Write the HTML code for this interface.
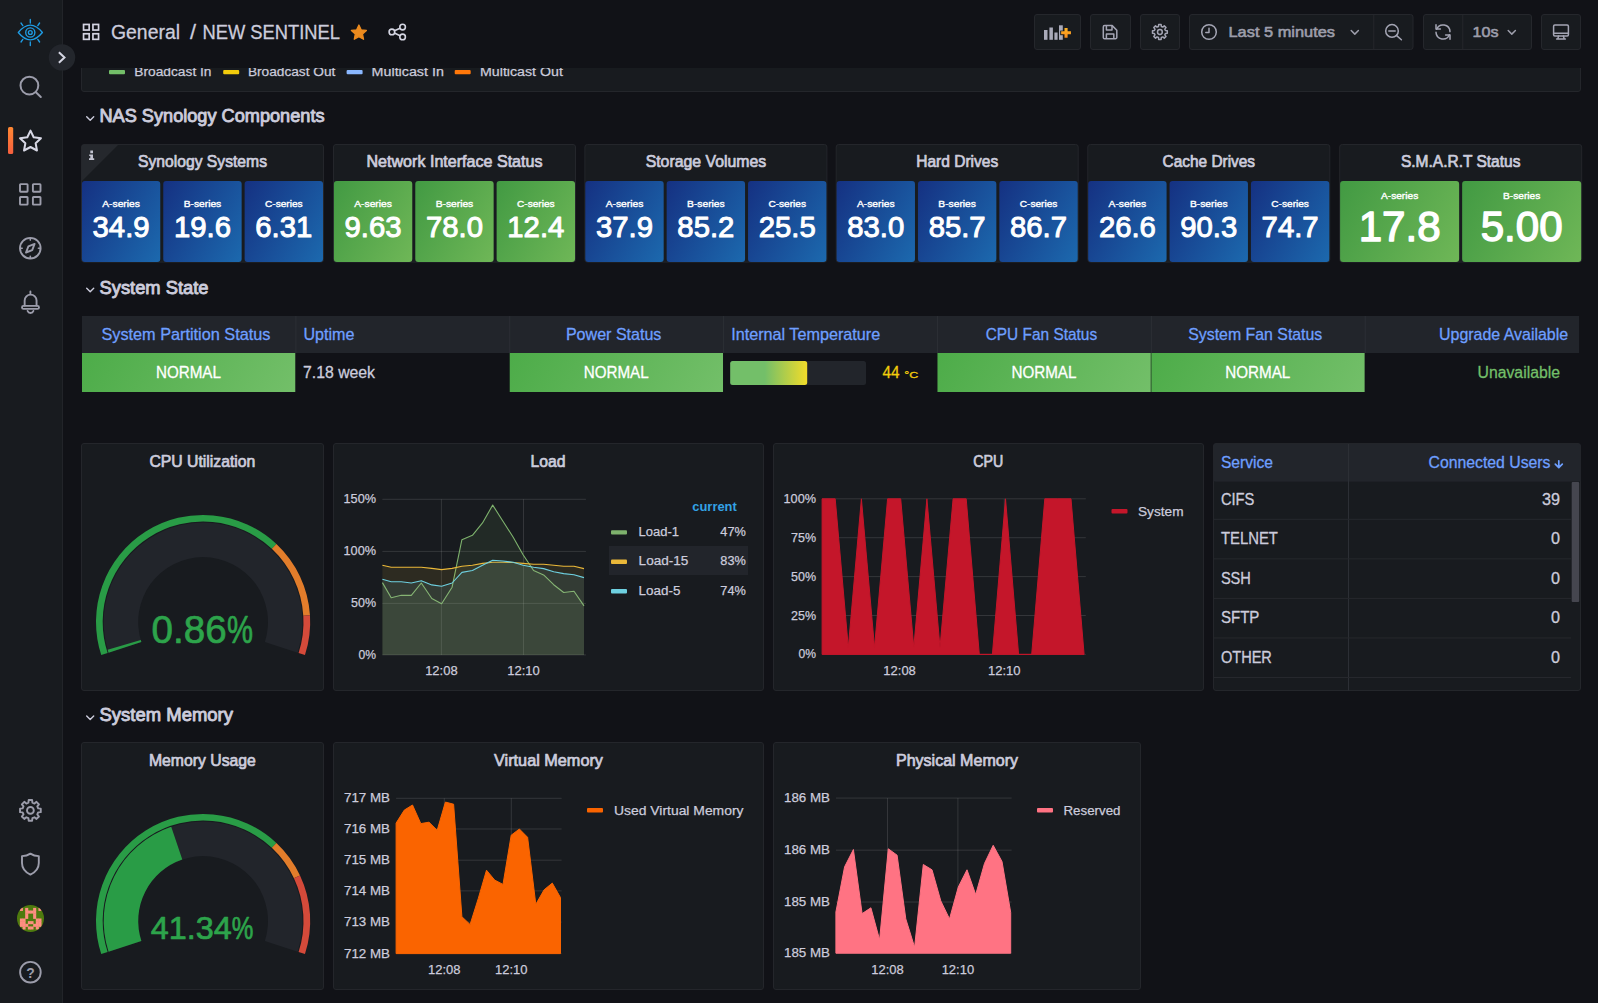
<!DOCTYPE html>
<html lang="en"><head><meta charset="utf-8"><title>NEW SENTINEL - Grafana</title>
<style>
html,body{margin:0;padding:0;background:#111217;overflow:hidden;}
body{width:1598px;height:1003px;font-family:"Liberation Sans",sans-serif;}
svg{display:block;position:absolute;left:0;top:0;font-family:"Liberation Sans",sans-serif;}
svg text{white-space:pre;}
</style></head><body>
<svg width="1598" height="1003" viewBox="0 0 1598 1003">
<rect x="0.00" y="0.00" width="1598.00" height="1003.00" fill="#111217" />
<clipPath id="cliptop"><rect x="63" y="68" width="1535" height="40"/></clipPath>
<g clip-path="url(#cliptop)">
<rect x="81.50" y="40.50" width="1499.00" height="51.00" fill="#181b1f" rx="2.5" stroke="#24262b" stroke-width="1" />
<rect x="109.00" y="69.90" width="16.00" height="4.30" fill="#73bf69" rx="1" />
<text x="134.30" y="75.90" font-size="13.7" fill="#ccccdc" textLength="77.20" lengthAdjust="spacingAndGlyphs" stroke="#ccccdc" stroke-width="0.25" stroke-linejoin="round" >Broadcast In</text>
<rect x="223.20" y="69.90" width="16.00" height="4.30" fill="#f2cc0c" rx="1" />
<text x="247.90" y="75.90" font-size="13.7" fill="#ccccdc" textLength="87.50" lengthAdjust="spacingAndGlyphs" stroke="#ccccdc" stroke-width="0.25" stroke-linejoin="round" >Broadcast Out</text>
<rect x="346.60" y="69.90" width="16.00" height="4.30" fill="#8ab8ff" rx="1" />
<text x="371.60" y="75.90" font-size="13.7" fill="#ccccdc" textLength="72.30" lengthAdjust="spacingAndGlyphs" stroke="#ccccdc" stroke-width="0.25" stroke-linejoin="round" >Multicast In</text>
<rect x="454.70" y="69.90" width="16.00" height="4.30" fill="#ff780a" rx="1" />
<text x="480.00" y="75.90" font-size="13.7" fill="#ccccdc" textLength="82.90" lengthAdjust="spacingAndGlyphs" stroke="#ccccdc" stroke-width="0.25" stroke-linejoin="round" >Multicast Out</text>
</g>
<path d="M86.7 116.7 l3.5 3.5 l3.5 -3.5" fill="none" stroke="#ccccdc" stroke-width="1.4" stroke-linecap="round" stroke-linejoin="round"/>
<text x="99.50" y="122.00" font-size="17.5" fill="#ccccdc" textLength="225.00" lengthAdjust="spacingAndGlyphs" stroke="#ccccdc" stroke-width="0.85" stroke-linejoin="round" >NAS Synology Components</text>
<path d="M86.7 288.2 l3.5 3.5 l3.5 -3.5" fill="none" stroke="#ccccdc" stroke-width="1.4" stroke-linecap="round" stroke-linejoin="round"/>
<text x="99.50" y="293.50" font-size="17.5" fill="#ccccdc" textLength="109.00" lengthAdjust="spacingAndGlyphs" stroke="#ccccdc" stroke-width="0.85" stroke-linejoin="round" >System State</text>
<path d="M86.7 716.1 l3.5 3.5 l3.5 -3.5" fill="none" stroke="#ccccdc" stroke-width="1.4" stroke-linecap="round" stroke-linejoin="round"/>
<text x="99.50" y="721.40" font-size="17.5" fill="#ccccdc" textLength="133.50" lengthAdjust="spacingAndGlyphs" stroke="#ccccdc" stroke-width="0.85" stroke-linejoin="round" >System Memory</text>
<defs>
<linearGradient id="gb" x1="0" y1="0" x2="1" y2="1"><stop offset="0" stop-color="#1a3795"/><stop offset="0.45" stop-color="#1b4ba0"/><stop offset="1" stop-color="#1f6db2"/></linearGradient>
<linearGradient id="gg" x1="0" y1="0" x2="1" y2="1"><stop offset="0" stop-color="#459b43"/><stop offset="0.45" stop-color="#56aa4e"/><stop offset="1" stop-color="#74bf69"/></linearGradient>
<linearGradient id="ggh" x1="0" y1="0" x2="1" y2="0.35"><stop offset="0" stop-color="#46a046"/><stop offset="0.5" stop-color="#5bb052"/><stop offset="1" stop-color="#73bf69"/></linearGradient>
</defs>
<rect x="81.50" y="144.50" width="242.00" height="117.60" fill="#181b1f" rx="2.5" stroke="#24262b" stroke-width="1" />
<path d="M82 145 h36 l-36 36 z" fill="#25282d"/>
<path d="M90.3 150.6 h2.7 v2.6 h-2.7 z M89.2 154.5 h3.8 v3.8 h1.2 v1.7 h-5.2 v-1.7 h1.3 v-2.2 h-1.1 z" fill="#c4c5d2"/>
<text x="202.50" y="166.50" font-size="15.9" fill="#ccccdc" textLength="129.00" lengthAdjust="spacingAndGlyphs" text-anchor="middle" stroke="#ccccdc" stroke-width="0.7" stroke-linejoin="round" >Synology Systems</text>
<linearGradient id="g1" gradientUnits="userSpaceOnUse" x1="74.16" y1="194.41" x2="168.01" y2="248.59"><stop offset="0" stop-color="#153182"/><stop offset="1" stop-color="#1c69ae"/></linearGradient>
<rect x="81.90" y="181.00" width="78.37" height="81.00" fill="url(#g1)" rx="3" />
<text x="121.08" y="207.00" font-size="9.9" fill="#ffffff" textLength="37.60" lengthAdjust="spacingAndGlyphs" text-anchor="middle" stroke="#ffffff" stroke-width="0.4" stroke-linejoin="round" >A-series</text>
<text x="121.08" y="236.60" font-size="29.6" fill="#ffffff" textLength="57.00" lengthAdjust="spacingAndGlyphs" text-anchor="middle" stroke="#ffffff" stroke-width="1.0" stroke-linejoin="round" >34.9</text>
<linearGradient id="g2" gradientUnits="userSpaceOnUse" x1="155.53" y1="194.41" x2="249.37" y2="248.59"><stop offset="0" stop-color="#153182"/><stop offset="1" stop-color="#1c69ae"/></linearGradient>
<rect x="163.27" y="181.00" width="78.37" height="81.00" fill="url(#g2)" rx="3" />
<text x="202.45" y="207.00" font-size="9.9" fill="#ffffff" textLength="37.60" lengthAdjust="spacingAndGlyphs" text-anchor="middle" stroke="#ffffff" stroke-width="0.4" stroke-linejoin="round" >B-series</text>
<text x="202.45" y="236.60" font-size="29.6" fill="#ffffff" textLength="57.00" lengthAdjust="spacingAndGlyphs" text-anchor="middle" stroke="#ffffff" stroke-width="1.0" stroke-linejoin="round" >19.6</text>
<linearGradient id="g3" gradientUnits="userSpaceOnUse" x1="236.89" y1="194.41" x2="330.74" y2="248.59"><stop offset="0" stop-color="#153182"/><stop offset="1" stop-color="#1c69ae"/></linearGradient>
<rect x="244.63" y="181.00" width="78.37" height="81.00" fill="url(#g3)" rx="3" />
<text x="283.82" y="207.00" font-size="9.9" fill="#ffffff" textLength="37.60" lengthAdjust="spacingAndGlyphs" text-anchor="middle" stroke="#ffffff" stroke-width="0.4" stroke-linejoin="round" >C-series</text>
<text x="283.82" y="236.60" font-size="29.6" fill="#ffffff" textLength="57.00" lengthAdjust="spacingAndGlyphs" text-anchor="middle" stroke="#ffffff" stroke-width="1.0" stroke-linejoin="round" >6.31</text>
<rect x="333.50" y="144.50" width="242.00" height="117.60" fill="#181b1f" rx="2.5" stroke="#24262b" stroke-width="1" />
<text x="454.50" y="166.50" font-size="15.9" fill="#ccccdc" textLength="176.00" lengthAdjust="spacingAndGlyphs" text-anchor="middle" stroke="#ccccdc" stroke-width="0.7" stroke-linejoin="round" >Network Interface Status</text>
<linearGradient id="g4" gradientUnits="userSpaceOnUse" x1="326.16" y1="194.41" x2="420.01" y2="248.59"><stop offset="0" stop-color="#429a43"/><stop offset="1" stop-color="#6fb757"/></linearGradient>
<rect x="333.90" y="181.00" width="78.37" height="81.00" fill="url(#g4)" rx="3" />
<text x="373.08" y="207.00" font-size="9.9" fill="#ffffff" textLength="37.60" lengthAdjust="spacingAndGlyphs" text-anchor="middle" stroke="#ffffff" stroke-width="0.4" stroke-linejoin="round" >A-series</text>
<text x="373.08" y="236.60" font-size="29.6" fill="#ffffff" textLength="57.00" lengthAdjust="spacingAndGlyphs" text-anchor="middle" stroke="#ffffff" stroke-width="1.0" stroke-linejoin="round" >9.63</text>
<linearGradient id="g5" gradientUnits="userSpaceOnUse" x1="407.53" y1="194.41" x2="501.37" y2="248.59"><stop offset="0" stop-color="#429a43"/><stop offset="1" stop-color="#6fb757"/></linearGradient>
<rect x="415.27" y="181.00" width="78.37" height="81.00" fill="url(#g5)" rx="3" />
<text x="454.45" y="207.00" font-size="9.9" fill="#ffffff" textLength="37.60" lengthAdjust="spacingAndGlyphs" text-anchor="middle" stroke="#ffffff" stroke-width="0.4" stroke-linejoin="round" >B-series</text>
<text x="454.45" y="236.60" font-size="29.6" fill="#ffffff" textLength="57.00" lengthAdjust="spacingAndGlyphs" text-anchor="middle" stroke="#ffffff" stroke-width="1.0" stroke-linejoin="round" >78.0</text>
<linearGradient id="g6" gradientUnits="userSpaceOnUse" x1="488.89" y1="194.41" x2="582.74" y2="248.59"><stop offset="0" stop-color="#429a43"/><stop offset="1" stop-color="#6fb757"/></linearGradient>
<rect x="496.63" y="181.00" width="78.37" height="81.00" fill="url(#g6)" rx="3" />
<text x="535.82" y="207.00" font-size="9.9" fill="#ffffff" textLength="37.60" lengthAdjust="spacingAndGlyphs" text-anchor="middle" stroke="#ffffff" stroke-width="0.4" stroke-linejoin="round" >C-series</text>
<text x="535.82" y="236.60" font-size="29.6" fill="#ffffff" textLength="57.00" lengthAdjust="spacingAndGlyphs" text-anchor="middle" stroke="#ffffff" stroke-width="1.0" stroke-linejoin="round" >12.4</text>
<rect x="584.90" y="144.50" width="242.00" height="117.60" fill="#181b1f" rx="2.5" stroke="#24262b" stroke-width="1" />
<text x="705.90" y="166.50" font-size="15.9" fill="#ccccdc" textLength="120.50" lengthAdjust="spacingAndGlyphs" text-anchor="middle" stroke="#ccccdc" stroke-width="0.7" stroke-linejoin="round" >Storage Volumes</text>
<linearGradient id="g7" gradientUnits="userSpaceOnUse" x1="577.56" y1="194.41" x2="671.41" y2="248.59"><stop offset="0" stop-color="#153182"/><stop offset="1" stop-color="#1c69ae"/></linearGradient>
<rect x="585.30" y="181.00" width="78.37" height="81.00" fill="url(#g7)" rx="3" />
<text x="624.48" y="207.00" font-size="9.9" fill="#ffffff" textLength="37.60" lengthAdjust="spacingAndGlyphs" text-anchor="middle" stroke="#ffffff" stroke-width="0.4" stroke-linejoin="round" >A-series</text>
<text x="624.48" y="236.60" font-size="29.6" fill="#ffffff" textLength="57.00" lengthAdjust="spacingAndGlyphs" text-anchor="middle" stroke="#ffffff" stroke-width="1.0" stroke-linejoin="round" >37.9</text>
<linearGradient id="g8" gradientUnits="userSpaceOnUse" x1="658.93" y1="194.41" x2="752.77" y2="248.59"><stop offset="0" stop-color="#153182"/><stop offset="1" stop-color="#1c69ae"/></linearGradient>
<rect x="666.67" y="181.00" width="78.37" height="81.00" fill="url(#g8)" rx="3" />
<text x="705.85" y="207.00" font-size="9.9" fill="#ffffff" textLength="37.60" lengthAdjust="spacingAndGlyphs" text-anchor="middle" stroke="#ffffff" stroke-width="0.4" stroke-linejoin="round" >B-series</text>
<text x="705.85" y="236.60" font-size="29.6" fill="#ffffff" textLength="57.00" lengthAdjust="spacingAndGlyphs" text-anchor="middle" stroke="#ffffff" stroke-width="1.0" stroke-linejoin="round" >85.2</text>
<linearGradient id="g9" gradientUnits="userSpaceOnUse" x1="740.29" y1="194.41" x2="834.14" y2="248.59"><stop offset="0" stop-color="#153182"/><stop offset="1" stop-color="#1c69ae"/></linearGradient>
<rect x="748.03" y="181.00" width="78.37" height="81.00" fill="url(#g9)" rx="3" />
<text x="787.22" y="207.00" font-size="9.9" fill="#ffffff" textLength="37.60" lengthAdjust="spacingAndGlyphs" text-anchor="middle" stroke="#ffffff" stroke-width="0.4" stroke-linejoin="round" >C-series</text>
<text x="787.22" y="236.60" font-size="29.6" fill="#ffffff" textLength="57.00" lengthAdjust="spacingAndGlyphs" text-anchor="middle" stroke="#ffffff" stroke-width="1.0" stroke-linejoin="round" >25.5</text>
<rect x="836.20" y="144.50" width="242.00" height="117.60" fill="#181b1f" rx="2.5" stroke="#24262b" stroke-width="1" />
<text x="957.20" y="166.50" font-size="15.9" fill="#ccccdc" textLength="82.00" lengthAdjust="spacingAndGlyphs" text-anchor="middle" stroke="#ccccdc" stroke-width="0.7" stroke-linejoin="round" >Hard Drives</text>
<linearGradient id="g10" gradientUnits="userSpaceOnUse" x1="828.86" y1="194.41" x2="922.71" y2="248.59"><stop offset="0" stop-color="#153182"/><stop offset="1" stop-color="#1c69ae"/></linearGradient>
<rect x="836.60" y="181.00" width="78.37" height="81.00" fill="url(#g10)" rx="3" />
<text x="875.78" y="207.00" font-size="9.9" fill="#ffffff" textLength="37.60" lengthAdjust="spacingAndGlyphs" text-anchor="middle" stroke="#ffffff" stroke-width="0.4" stroke-linejoin="round" >A-series</text>
<text x="875.78" y="236.60" font-size="29.6" fill="#ffffff" textLength="57.00" lengthAdjust="spacingAndGlyphs" text-anchor="middle" stroke="#ffffff" stroke-width="1.0" stroke-linejoin="round" >83.0</text>
<linearGradient id="g11" gradientUnits="userSpaceOnUse" x1="910.23" y1="194.41" x2="1004.07" y2="248.59"><stop offset="0" stop-color="#153182"/><stop offset="1" stop-color="#1c69ae"/></linearGradient>
<rect x="917.97" y="181.00" width="78.37" height="81.00" fill="url(#g11)" rx="3" />
<text x="957.15" y="207.00" font-size="9.9" fill="#ffffff" textLength="37.60" lengthAdjust="spacingAndGlyphs" text-anchor="middle" stroke="#ffffff" stroke-width="0.4" stroke-linejoin="round" >B-series</text>
<text x="957.15" y="236.60" font-size="29.6" fill="#ffffff" textLength="57.00" lengthAdjust="spacingAndGlyphs" text-anchor="middle" stroke="#ffffff" stroke-width="1.0" stroke-linejoin="round" >85.7</text>
<linearGradient id="g12" gradientUnits="userSpaceOnUse" x1="991.59" y1="194.41" x2="1085.44" y2="248.59"><stop offset="0" stop-color="#153182"/><stop offset="1" stop-color="#1c69ae"/></linearGradient>
<rect x="999.33" y="181.00" width="78.37" height="81.00" fill="url(#g12)" rx="3" />
<text x="1038.52" y="207.00" font-size="9.9" fill="#ffffff" textLength="37.60" lengthAdjust="spacingAndGlyphs" text-anchor="middle" stroke="#ffffff" stroke-width="0.4" stroke-linejoin="round" >C-series</text>
<text x="1038.52" y="236.60" font-size="29.6" fill="#ffffff" textLength="57.00" lengthAdjust="spacingAndGlyphs" text-anchor="middle" stroke="#ffffff" stroke-width="1.0" stroke-linejoin="round" >86.7</text>
<rect x="1087.80" y="144.50" width="242.00" height="117.60" fill="#181b1f" rx="2.5" stroke="#24262b" stroke-width="1" />
<text x="1208.80" y="166.50" font-size="15.9" fill="#ccccdc" textLength="92.50" lengthAdjust="spacingAndGlyphs" text-anchor="middle" stroke="#ccccdc" stroke-width="0.7" stroke-linejoin="round" >Cache Drives</text>
<linearGradient id="g13" gradientUnits="userSpaceOnUse" x1="1080.46" y1="194.41" x2="1174.31" y2="248.59"><stop offset="0" stop-color="#153182"/><stop offset="1" stop-color="#1c69ae"/></linearGradient>
<rect x="1088.20" y="181.00" width="78.37" height="81.00" fill="url(#g13)" rx="3" />
<text x="1127.38" y="207.00" font-size="9.9" fill="#ffffff" textLength="37.60" lengthAdjust="spacingAndGlyphs" text-anchor="middle" stroke="#ffffff" stroke-width="0.4" stroke-linejoin="round" >A-series</text>
<text x="1127.38" y="236.60" font-size="29.6" fill="#ffffff" textLength="57.00" lengthAdjust="spacingAndGlyphs" text-anchor="middle" stroke="#ffffff" stroke-width="1.0" stroke-linejoin="round" >26.6</text>
<linearGradient id="g14" gradientUnits="userSpaceOnUse" x1="1161.83" y1="194.41" x2="1255.67" y2="248.59"><stop offset="0" stop-color="#153182"/><stop offset="1" stop-color="#1c69ae"/></linearGradient>
<rect x="1169.57" y="181.00" width="78.37" height="81.00" fill="url(#g14)" rx="3" />
<text x="1208.75" y="207.00" font-size="9.9" fill="#ffffff" textLength="37.60" lengthAdjust="spacingAndGlyphs" text-anchor="middle" stroke="#ffffff" stroke-width="0.4" stroke-linejoin="round" >B-series</text>
<text x="1208.75" y="236.60" font-size="29.6" fill="#ffffff" textLength="57.00" lengthAdjust="spacingAndGlyphs" text-anchor="middle" stroke="#ffffff" stroke-width="1.0" stroke-linejoin="round" >90.3</text>
<linearGradient id="g15" gradientUnits="userSpaceOnUse" x1="1243.19" y1="194.41" x2="1337.04" y2="248.59"><stop offset="0" stop-color="#153182"/><stop offset="1" stop-color="#1c69ae"/></linearGradient>
<rect x="1250.93" y="181.00" width="78.37" height="81.00" fill="url(#g15)" rx="3" />
<text x="1290.12" y="207.00" font-size="9.9" fill="#ffffff" textLength="37.60" lengthAdjust="spacingAndGlyphs" text-anchor="middle" stroke="#ffffff" stroke-width="0.4" stroke-linejoin="round" >C-series</text>
<text x="1290.12" y="236.60" font-size="29.6" fill="#ffffff" textLength="57.00" lengthAdjust="spacingAndGlyphs" text-anchor="middle" stroke="#ffffff" stroke-width="1.0" stroke-linejoin="round" >74.7</text>
<rect x="1339.70" y="144.50" width="242.00" height="117.60" fill="#181b1f" rx="2.5" stroke="#24262b" stroke-width="1" />
<text x="1460.70" y="166.50" font-size="15.9" fill="#ccccdc" textLength="119.50" lengthAdjust="spacingAndGlyphs" text-anchor="middle" stroke="#ccccdc" stroke-width="0.7" stroke-linejoin="round" >S.M.A.R.T Status</text>
<linearGradient id="g16" gradientUnits="userSpaceOnUse" x1="1337.44" y1="185.60" x2="1461.81" y2="257.40"><stop offset="0" stop-color="#429a43"/><stop offset="1" stop-color="#6fb757"/></linearGradient>
<rect x="1340.10" y="181.00" width="119.05" height="81.00" fill="url(#g16)" rx="3" />
<text x="1399.63" y="199.00" font-size="9.9" fill="#ffffff" textLength="37.20" lengthAdjust="spacingAndGlyphs" text-anchor="middle" stroke="#ffffff" stroke-width="0.4" stroke-linejoin="round" >A-series</text>
<text x="1399.63" y="241.00" font-size="42.6" fill="#ffffff" textLength="82.00" lengthAdjust="spacingAndGlyphs" text-anchor="middle" stroke="#ffffff" stroke-width="1.4" stroke-linejoin="round" >17.8</text>
<linearGradient id="g17" gradientUnits="userSpaceOnUse" x1="1459.49" y1="185.60" x2="1583.86" y2="257.40"><stop offset="0" stop-color="#429a43"/><stop offset="1" stop-color="#6fb757"/></linearGradient>
<rect x="1462.15" y="181.00" width="119.05" height="81.00" fill="url(#g17)" rx="3" />
<text x="1521.68" y="199.00" font-size="9.9" fill="#ffffff" textLength="37.20" lengthAdjust="spacingAndGlyphs" text-anchor="middle" stroke="#ffffff" stroke-width="0.4" stroke-linejoin="round" >B-series</text>
<text x="1521.68" y="241.00" font-size="42.6" fill="#ffffff" textLength="82.00" lengthAdjust="spacingAndGlyphs" text-anchor="middle" stroke="#ffffff" stroke-width="1.4" stroke-linejoin="round" >5.00</text>
<rect x="82.00" y="316.00" width="1497.10" height="37.00" fill="#22252b" />
<rect x="295.37" y="316.00" width="1.00" height="37.00" fill="#2c2f35" />
<rect x="509.24" y="316.00" width="1.00" height="37.00" fill="#2c2f35" />
<rect x="723.11" y="316.00" width="1.00" height="37.00" fill="#2c2f35" />
<rect x="936.98" y="316.00" width="1.00" height="37.00" fill="#2c2f35" />
<rect x="1150.85" y="316.00" width="1.00" height="37.00" fill="#2c2f35" />
<rect x="1364.72" y="316.00" width="1.00" height="37.00" fill="#2c2f35" />
<text x="185.94" y="339.80" font-size="16.2" fill="#6e9fff" textLength="169.00" lengthAdjust="spacingAndGlyphs" text-anchor="middle" stroke="#6e9fff" stroke-width="0.3" stroke-linejoin="round" >System Partition Status</text>
<text x="303.47" y="339.80" font-size="16.2" fill="#6e9fff" textLength="51.00" lengthAdjust="spacingAndGlyphs" stroke="#6e9fff" stroke-width="0.3" stroke-linejoin="round" >Uptime</text>
<text x="613.67" y="339.80" font-size="16.2" fill="#6e9fff" textLength="95.50" lengthAdjust="spacingAndGlyphs" text-anchor="middle" stroke="#6e9fff" stroke-width="0.3" stroke-linejoin="round" >Power Status</text>
<text x="731.21" y="339.80" font-size="16.2" fill="#6e9fff" textLength="149.00" lengthAdjust="spacingAndGlyphs" stroke="#6e9fff" stroke-width="0.3" stroke-linejoin="round" >Internal Temperature</text>
<text x="1041.41" y="339.80" font-size="16.2" fill="#6e9fff" textLength="111.50" lengthAdjust="spacingAndGlyphs" text-anchor="middle" stroke="#6e9fff" stroke-width="0.3" stroke-linejoin="round" >CPU Fan Status</text>
<text x="1255.28" y="339.80" font-size="16.2" fill="#6e9fff" textLength="134.00" lengthAdjust="spacingAndGlyphs" text-anchor="middle" stroke="#6e9fff" stroke-width="0.3" stroke-linejoin="round" >System Fan Status</text>
<text x="1568.09" y="339.80" font-size="16.2" fill="#6e9fff" textLength="129.00" lengthAdjust="spacingAndGlyphs" text-anchor="end" stroke="#6e9fff" stroke-width="0.3" stroke-linejoin="round" >Upgrade Available</text>
<linearGradient id="g18" gradientUnits="userSpaceOnUse" x1="100.22" y1="321.45" x2="277.05" y2="423.55"><stop offset="0" stop-color="#4dac49"/><stop offset="1" stop-color="#73bf69"/></linearGradient>
<rect x="82.00" y="353.00" width="213.27" height="39.00" fill="url(#g18)" />
<text x="188.44" y="378.00" font-size="16.2" fill="#ffffff" textLength="65.00" lengthAdjust="spacingAndGlyphs" text-anchor="middle" stroke="#ffffff" stroke-width="0.3" stroke-linejoin="round" >NORMAL</text>
<linearGradient id="g19" gradientUnits="userSpaceOnUse" x1="527.96" y1="321.45" x2="704.79" y2="423.55"><stop offset="0" stop-color="#4dac49"/><stop offset="1" stop-color="#73bf69"/></linearGradient>
<rect x="509.74" y="353.00" width="213.27" height="39.00" fill="url(#g19)" />
<text x="616.17" y="378.00" font-size="16.2" fill="#ffffff" textLength="65.00" lengthAdjust="spacingAndGlyphs" text-anchor="middle" stroke="#ffffff" stroke-width="0.3" stroke-linejoin="round" >NORMAL</text>
<linearGradient id="g20" gradientUnits="userSpaceOnUse" x1="955.70" y1="321.45" x2="1132.53" y2="423.55"><stop offset="0" stop-color="#4dac49"/><stop offset="1" stop-color="#73bf69"/></linearGradient>
<rect x="937.48" y="353.00" width="213.27" height="39.00" fill="url(#g20)" />
<text x="1043.91" y="378.00" font-size="16.2" fill="#ffffff" textLength="65.00" lengthAdjust="spacingAndGlyphs" text-anchor="middle" stroke="#ffffff" stroke-width="0.3" stroke-linejoin="round" >NORMAL</text>
<linearGradient id="g21" gradientUnits="userSpaceOnUse" x1="1169.57" y1="321.45" x2="1346.40" y2="423.55"><stop offset="0" stop-color="#4dac49"/><stop offset="1" stop-color="#73bf69"/></linearGradient>
<rect x="1151.35" y="353.00" width="213.27" height="39.00" fill="url(#g21)" />
<text x="1257.78" y="378.00" font-size="16.2" fill="#ffffff" textLength="65.00" lengthAdjust="spacingAndGlyphs" text-anchor="middle" stroke="#ffffff" stroke-width="0.3" stroke-linejoin="round" >NORMAL</text>
<text x="303.00" y="378.00" font-size="16" fill="#ccccdc" textLength="72.00" lengthAdjust="spacingAndGlyphs" stroke="#ccccdc" stroke-width="0.3" stroke-linejoin="round" >7.18 week</text>
<rect x="730.20" y="361.10" width="135.80" height="23.90" fill="#22252b" rx="2.5" />
<linearGradient id="tg" x1="0" y1="0" x2="1" y2="0"><stop offset="0" stop-color="#73bf69"/><stop offset="0.45" stop-color="#73bf69"/><stop offset="1" stop-color="#f2dc2a"/></linearGradient>
<rect x="730.20" y="361.10" width="77.00" height="23.90" fill="url(#tg)" rx="2.5" />
<text x="882.50" y="378.00" font-size="16" fill="#f2cc0c" textLength="17.00" lengthAdjust="spacingAndGlyphs" stroke="#f2cc0c" stroke-width="0.3" stroke-linejoin="round" >44</text>
<text x="904.20" y="378.00" font-size="9.3" fill="#f2cc0c" textLength="14.00" lengthAdjust="spacingAndGlyphs" stroke="#f2cc0c" stroke-width="0.3" stroke-linejoin="round" >°C</text>
<text x="1560.00" y="378.00" font-size="16" fill="#73bf69" textLength="82.50" lengthAdjust="spacingAndGlyphs" text-anchor="end" stroke="#73bf69" stroke-width="0.3" stroke-linejoin="round" >Unavailable</text>
<rect x="81.50" y="443.50" width="242.00" height="247.00" fill="#181b1f" rx="2.5" stroke="#24262b" stroke-width="1" />
<rect x="333.50" y="443.50" width="430.00" height="247.00" fill="#181b1f" rx="2.5" stroke="#24262b" stroke-width="1" />
<rect x="773.50" y="443.50" width="430.00" height="247.00" fill="#181b1f" rx="2.5" stroke="#24262b" stroke-width="1" />
<rect x="1213.50" y="443.50" width="367.00" height="247.00" fill="#181b1f" rx="2.5" stroke="#24262b" stroke-width="1" />
<text x="202.40" y="467.00" font-size="15.9" fill="#ccccdc" textLength="106.00" lengthAdjust="spacingAndGlyphs" text-anchor="middle" stroke="#ccccdc" stroke-width="0.7" stroke-linejoin="round" >CPU Utilization</text>
<text x="548.00" y="467.00" font-size="15.9" fill="#ccccdc" textLength="35.00" lengthAdjust="spacingAndGlyphs" text-anchor="middle" stroke="#ccccdc" stroke-width="0.7" stroke-linejoin="round" >Load</text>
<text x="988.30" y="467.00" font-size="15.9" fill="#ccccdc" textLength="30.00" lengthAdjust="spacingAndGlyphs" text-anchor="middle" stroke="#ccccdc" stroke-width="0.7" stroke-linejoin="round" >CPU</text>
<path d="M108.56 652.72 A99.4 99.4 0 1 1 297.64 652.72 L264.82 642.06 A64.9 64.9 0 1 0 141.38 642.06 Z" fill="#22252b"/>
<path d="M108.56 652.72 A99.4 99.4 0 0 1 107.62 649.64 L140.76 640.04 A64.9 64.9 0 0 0 141.38 642.06 Z" fill="#299c46"/>
<path d="M101.24 655.10 A107.1 107.1 0 0 1 276.41 543.93 L271.83 548.81 A100.4 100.4 0 0 0 107.61 653.03 Z" fill="#299c46"/>
<path d="M276.41 543.93 A107.1 107.1 0 0 1 309.99 615.28 L303.30 615.70 A100.4 100.4 0 0 0 271.83 548.81 Z" fill="#e27d2b"/>
<path d="M309.99 615.28 A107.1 107.1 0 0 1 304.96 655.10 L298.59 653.03 A100.4 100.4 0 0 0 303.30 615.70 Z" fill="#d44a3a"/>
<text x="151.60" y="642.80" font-size="38" fill="#2da44b" textLength="75.00" lengthAdjust="spacingAndGlyphs" stroke="#2da44b" stroke-width="0.7" stroke-linejoin="round" >0.86</text>
<text x="227.00" y="642.80" font-size="38" fill="#2da44b" textLength="26.00" lengthAdjust="spacingAndGlyphs" stroke="#2da44b" stroke-width="0.7" stroke-linejoin="round" >%</text>
<rect x="382.40" y="498.80" width="203.50" height="1.00" fill="rgba(255,255,255,0.12)" />
<text x="376.00" y="503.30" font-size="13.7" fill="#ccccdc" textLength="32.50" lengthAdjust="spacingAndGlyphs" text-anchor="end" stroke="#ccccdc" stroke-width="0.25" stroke-linejoin="round" >150%</text>
<rect x="382.40" y="550.90" width="203.50" height="1.00" fill="rgba(255,255,255,0.12)" />
<text x="376.00" y="555.40" font-size="13.7" fill="#ccccdc" textLength="32.50" lengthAdjust="spacingAndGlyphs" text-anchor="end" stroke="#ccccdc" stroke-width="0.25" stroke-linejoin="round" >100%</text>
<rect x="382.40" y="602.90" width="203.50" height="1.00" fill="rgba(255,255,255,0.12)" />
<text x="376.00" y="607.40" font-size="13.7" fill="#ccccdc" textLength="25.00" lengthAdjust="spacingAndGlyphs" text-anchor="end" stroke="#ccccdc" stroke-width="0.25" stroke-linejoin="round" >50%</text>
<rect x="382.40" y="654.40" width="203.50" height="1.00" fill="rgba(255,255,255,0.12)" />
<text x="376.00" y="658.90" font-size="13.7" fill="#ccccdc" textLength="17.50" lengthAdjust="spacingAndGlyphs" text-anchor="end" stroke="#ccccdc" stroke-width="0.25" stroke-linejoin="round" >0%</text>
<rect x="440.90" y="499.30" width="1.00" height="155.60" fill="rgba(255,255,255,0.12)" />
<text x="441.40" y="675.20" font-size="13.7" fill="#ccccdc" textLength="32.50" lengthAdjust="spacingAndGlyphs" text-anchor="middle" stroke="#ccccdc" stroke-width="0.25" stroke-linejoin="round" >12:08</text>
<rect x="523.00" y="499.30" width="1.00" height="155.60" fill="rgba(255,255,255,0.12)" />
<text x="523.50" y="675.20" font-size="13.7" fill="#ccccdc" textLength="32.50" lengthAdjust="spacingAndGlyphs" text-anchor="middle" stroke="#ccccdc" stroke-width="0.25" stroke-linejoin="round" >12:10</text>
<polygon points="382.4,654.9 382.4,582.6 391.2,597.7 401.2,595.2 411.3,595.4 421.3,583.0 431.8,598.5 441.6,603.8 452.1,587.2 461.9,539.7 472.4,535.3 482.5,522.9 492.7,505.1 502.8,521.0 513.2,537.2 523.1,554.8 533.6,570.5 543.6,574.9 553.7,584.7 563.7,592.5 574.0,591.2 584.0,605.9 584.0,654.9" fill="#7eb26d" fill-opacity="0.1"/>
<polyline points="382.4,582.6 391.2,597.7 401.2,595.2 411.3,595.4 421.3,583.0 431.8,598.5 441.6,603.8 452.1,587.2 461.9,539.7 472.4,535.3 482.5,522.9 492.7,505.1 502.8,521.0 513.2,537.2 523.1,554.8 533.6,570.5 543.6,574.9 553.7,584.7 563.7,592.5 574.0,591.2 584.0,605.9" fill="none" stroke="#7eb26d" stroke-width="1.1" stroke-linejoin="round"/>
<polygon points="382.4,654.9 382.4,565.2 391.2,567.3 401.2,567.3 411.3,567.3 421.3,567.3 431.8,568.4 441.6,569.6 452.1,568.4 461.9,566.3 472.4,565.2 482.5,563.4 492.7,562.3 502.8,562.3 513.2,562.5 523.1,563.4 533.6,564.2 543.6,564.2 553.7,565.2 563.7,566.3 574.0,566.3 584.0,568.6 584.0,654.9" fill="#eab839" fill-opacity="0.1"/>
<polyline points="382.4,565.2 391.2,567.3 401.2,567.3 411.3,567.3 421.3,567.3 431.8,568.4 441.6,569.6 452.1,568.4 461.9,566.3 472.4,565.2 482.5,563.4 492.7,562.3 502.8,562.3 513.2,562.5 523.1,563.4 533.6,564.2 543.6,564.2 553.7,565.2 563.7,566.3 574.0,566.3 584.0,568.6" fill="none" stroke="#eab839" stroke-width="1.1" stroke-linejoin="round"/>
<polygon points="382.4,654.9 382.4,579.3 391.2,581.8 401.2,581.8 411.3,583.0 421.3,580.7 431.8,584.9 441.6,586.2 452.1,583.0 461.9,572.4 472.4,570.5 482.5,565.2 492.7,560.2 502.8,561.0 513.2,562.3 523.1,565.2 533.6,567.3 543.6,568.6 553.7,571.7 563.7,573.6 574.0,574.7 584.0,577.6 584.0,654.9" fill="#6ed0e0" fill-opacity="0.1"/>
<polyline points="382.4,579.3 391.2,581.8 401.2,581.8 411.3,583.0 421.3,580.7 431.8,584.9 441.6,586.2 452.1,583.0 461.9,572.4 472.4,570.5 482.5,565.2 492.7,560.2 502.8,561.0 513.2,562.3 523.1,565.2 533.6,567.3 543.6,568.6 553.7,571.7 563.7,573.6 574.0,574.7 584.0,577.6" fill="none" stroke="#6ed0e0" stroke-width="1.1" stroke-linejoin="round"/>
<text x="736.80" y="510.90" font-size="13.2" fill="#33a2e5" textLength="44.50" lengthAdjust="spacingAndGlyphs" text-anchor="end" font-weight="700" >current</text>
<rect x="609.00" y="546.00" width="139.00" height="29.00" fill="#22252b" />
<rect x="611.00" y="530.20" width="16.00" height="4.40" fill="#7eb26d" rx="1" />
<text x="638.60" y="536.00" font-size="13.7" fill="#ccccdc" textLength="40.50" lengthAdjust="spacingAndGlyphs" stroke="#ccccdc" stroke-width="0.25" stroke-linejoin="round" >Load-1</text>
<text x="745.80" y="536.00" font-size="13.7" fill="#ccccdc" textLength="25.50" lengthAdjust="spacingAndGlyphs" text-anchor="end" stroke="#ccccdc" stroke-width="0.25" stroke-linejoin="round" >47%</text>
<rect x="611.00" y="559.60" width="16.00" height="4.40" fill="#eab839" rx="1" />
<text x="638.60" y="565.40" font-size="13.7" fill="#ccccdc" textLength="49.80" lengthAdjust="spacingAndGlyphs" stroke="#ccccdc" stroke-width="0.25" stroke-linejoin="round" >Load-15</text>
<text x="745.80" y="565.40" font-size="13.7" fill="#ccccdc" textLength="25.50" lengthAdjust="spacingAndGlyphs" text-anchor="end" stroke="#ccccdc" stroke-width="0.25" stroke-linejoin="round" >83%</text>
<rect x="611.00" y="589.00" width="16.00" height="4.40" fill="#6ed0e0" rx="1" />
<text x="638.60" y="594.80" font-size="13.7" fill="#ccccdc" textLength="41.80" lengthAdjust="spacingAndGlyphs" stroke="#ccccdc" stroke-width="0.25" stroke-linejoin="round" >Load-5</text>
<text x="745.80" y="594.80" font-size="13.7" fill="#ccccdc" textLength="25.50" lengthAdjust="spacingAndGlyphs" text-anchor="end" stroke="#ccccdc" stroke-width="0.25" stroke-linejoin="round" >74%</text>
<rect x="822.10" y="498.30" width="263.70" height="1.00" fill="rgba(255,255,255,0.12)" />
<text x="816.00" y="502.80" font-size="13.7" fill="#ccccdc" textLength="32.50" lengthAdjust="spacingAndGlyphs" text-anchor="end" stroke="#ccccdc" stroke-width="0.25" stroke-linejoin="round" >100%</text>
<rect x="822.10" y="537.20" width="263.70" height="1.00" fill="rgba(255,255,255,0.12)" />
<text x="816.00" y="541.70" font-size="13.7" fill="#ccccdc" textLength="25.00" lengthAdjust="spacingAndGlyphs" text-anchor="end" stroke="#ccccdc" stroke-width="0.25" stroke-linejoin="round" >75%</text>
<rect x="822.10" y="576.10" width="263.70" height="1.00" fill="rgba(255,255,255,0.12)" />
<text x="816.00" y="580.60" font-size="13.7" fill="#ccccdc" textLength="25.00" lengthAdjust="spacingAndGlyphs" text-anchor="end" stroke="#ccccdc" stroke-width="0.25" stroke-linejoin="round" >50%</text>
<rect x="822.10" y="615.00" width="263.70" height="1.00" fill="rgba(255,255,255,0.12)" />
<text x="816.00" y="619.50" font-size="13.7" fill="#ccccdc" textLength="25.00" lengthAdjust="spacingAndGlyphs" text-anchor="end" stroke="#ccccdc" stroke-width="0.25" stroke-linejoin="round" >25%</text>
<rect x="822.10" y="653.90" width="263.70" height="1.00" fill="rgba(255,255,255,0.12)" />
<text x="816.00" y="658.40" font-size="13.7" fill="#ccccdc" textLength="17.50" lengthAdjust="spacingAndGlyphs" text-anchor="end" stroke="#ccccdc" stroke-width="0.25" stroke-linejoin="round" >0%</text>
<rect x="899.10" y="498.80" width="1.00" height="155.60" fill="rgba(255,255,255,0.12)" />
<text x="899.60" y="674.70" font-size="13.7" fill="#ccccdc" textLength="32.50" lengthAdjust="spacingAndGlyphs" text-anchor="middle" stroke="#ccccdc" stroke-width="0.25" stroke-linejoin="round" >12:08</text>
<rect x="1003.80" y="498.80" width="1.00" height="155.60" fill="rgba(255,255,255,0.12)" />
<text x="1004.30" y="674.70" font-size="13.7" fill="#ccccdc" textLength="32.50" lengthAdjust="spacingAndGlyphs" text-anchor="middle" stroke="#ccccdc" stroke-width="0.25" stroke-linejoin="round" >12:10</text>
<polygon points="822.1,654.4 822.1,498.8 835.2,498.8 848.3,647.4 861.4,498.8 874.5,647.4 887.6,498.8 900.7,498.8 913.8,647.4 926.9,498.8 940.0,647.4 953.1,498.8 966.2,498.8 979.3,654.4 992.4,654.4 1005.5,498.8 1018.6,654.4 1031.7,654.4 1044.8,498.8 1057.9,498.8 1071.0,498.8 1084.1,654.4 1084.1,654.4" fill="#c4162a" stroke="#c4162a" stroke-width="1" stroke-linejoin="miter"/>
<rect x="1111.50" y="509.00" width="16.00" height="4.40" fill="#c4162a" rx="1" />
<text x="1138.00" y="515.60" font-size="13.7" fill="#ccccdc" textLength="45.50" lengthAdjust="spacingAndGlyphs" stroke="#ccccdc" stroke-width="0.25" stroke-linejoin="round" >System</text>
<rect x="1213.50" y="443.50" width="367.00" height="38.00" fill="#22252b" rx="2" />
<rect x="1213.50" y="460.00" width="367.00" height="21.30" fill="#22252b" />
<rect x="1348.00" y="444.00" width="1.00" height="246.50" fill="#2c2f35" />
<text x="1220.90" y="467.50" font-size="16" fill="#6e9fff" textLength="52.00" lengthAdjust="spacingAndGlyphs" stroke="#6e9fff" stroke-width="0.3" stroke-linejoin="round" >Service</text>
<text x="1550.50" y="467.50" font-size="16" fill="#6e9fff" textLength="122.00" lengthAdjust="spacingAndGlyphs" text-anchor="end" stroke="#6e9fff" stroke-width="0.3" stroke-linejoin="round" >Connected Users</text>
<path d="M1558.8 460.8 v6.6 M1555.3 464.1 l3.5 3.5 l3.5 -3.5" fill="none" stroke="#6e9fff" stroke-width="1.7" stroke-linecap="round" stroke-linejoin="round"/>
<text x="1220.90" y="505.00" font-size="16" fill="#ccccdc" textLength="33.50" lengthAdjust="spacingAndGlyphs" stroke="#ccccdc" stroke-width="0.3" stroke-linejoin="round" >CIFS</text>
<text x="1560.00" y="505.00" font-size="16" fill="#ccccdc" textLength="18.00" lengthAdjust="spacingAndGlyphs" text-anchor="end" stroke="#ccccdc" stroke-width="0.3" stroke-linejoin="round" >39</text>
<rect x="1214.00" y="518.80" width="357.00" height="1.00" fill="#26282d" />
<text x="1220.90" y="544.47" font-size="16" fill="#ccccdc" textLength="57.00" lengthAdjust="spacingAndGlyphs" stroke="#ccccdc" stroke-width="0.3" stroke-linejoin="round" >TELNET</text>
<text x="1560.00" y="544.47" font-size="16" fill="#ccccdc" textLength="9.00" lengthAdjust="spacingAndGlyphs" text-anchor="end" stroke="#ccccdc" stroke-width="0.3" stroke-linejoin="round" >0</text>
<rect x="1214.00" y="558.35" width="357.00" height="1.00" fill="#26282d" />
<text x="1220.90" y="583.94" font-size="16" fill="#ccccdc" textLength="30.00" lengthAdjust="spacingAndGlyphs" stroke="#ccccdc" stroke-width="0.3" stroke-linejoin="round" >SSH</text>
<text x="1560.00" y="583.94" font-size="16" fill="#ccccdc" textLength="9.00" lengthAdjust="spacingAndGlyphs" text-anchor="end" stroke="#ccccdc" stroke-width="0.3" stroke-linejoin="round" >0</text>
<rect x="1214.00" y="597.90" width="357.00" height="1.00" fill="#26282d" />
<text x="1220.90" y="623.41" font-size="16" fill="#ccccdc" textLength="38.50" lengthAdjust="spacingAndGlyphs" stroke="#ccccdc" stroke-width="0.3" stroke-linejoin="round" >SFTP</text>
<text x="1560.00" y="623.41" font-size="16" fill="#ccccdc" textLength="9.00" lengthAdjust="spacingAndGlyphs" text-anchor="end" stroke="#ccccdc" stroke-width="0.3" stroke-linejoin="round" >0</text>
<rect x="1214.00" y="637.45" width="357.00" height="1.00" fill="#26282d" />
<text x="1220.90" y="662.88" font-size="16" fill="#ccccdc" textLength="51.00" lengthAdjust="spacingAndGlyphs" stroke="#ccccdc" stroke-width="0.3" stroke-linejoin="round" >OTHER</text>
<text x="1560.00" y="662.88" font-size="16" fill="#ccccdc" textLength="9.00" lengthAdjust="spacingAndGlyphs" text-anchor="end" stroke="#ccccdc" stroke-width="0.3" stroke-linejoin="round" >0</text>
<rect x="1214.00" y="677.00" width="357.00" height="1.00" fill="#26282d" />
<rect x="1571.70" y="482.00" width="7.50" height="120.00" fill="#45464f" rx="1" />
<rect x="81.50" y="742.50" width="242.00" height="247.00" fill="#181b1f" rx="2.5" stroke="#24262b" stroke-width="1" />
<rect x="333.50" y="742.50" width="430.00" height="247.00" fill="#181b1f" rx="2.5" stroke="#24262b" stroke-width="1" />
<rect x="773.50" y="742.50" width="367.00" height="247.00" fill="#181b1f" rx="2.5" stroke="#24262b" stroke-width="1" />
<path d="M108.56 951.72 A99.4 99.4 0 1 1 297.64 951.72 L264.82 941.06 A64.9 64.9 0 1 0 141.38 941.06 Z" fill="#22252b"/>
<path d="M108.56 951.72 A99.4 99.4 0 0 1 171.22 826.85 L182.29 859.53 A64.9 64.9 0 0 0 141.38 941.06 Z" fill="#299c46"/>
<path d="M101.24 954.10 A107.1 107.1 0 0 1 276.41 842.93 L271.83 847.81 A100.4 100.4 0 0 0 107.61 952.03 Z" fill="#299c46"/>
<path d="M276.41 842.93 A107.1 107.1 0 0 1 300.01 875.40 L293.94 878.25 A100.4 100.4 0 0 0 271.83 847.81 Z" fill="#e27d2b"/>
<path d="M300.01 875.40 A107.1 107.1 0 0 1 304.96 954.10 L298.59 952.03 A100.4 100.4 0 0 0 293.94 878.25 Z" fill="#d44a3a"/>
<text x="150.70" y="938.90" font-size="31" fill="#2da44b" textLength="81.00" lengthAdjust="spacingAndGlyphs" stroke="#2da44b" stroke-width="0.7" stroke-linejoin="round" >41.34</text>
<text x="231.80" y="938.90" font-size="31" fill="#2da44b" textLength="21.60" lengthAdjust="spacingAndGlyphs" stroke="#2da44b" stroke-width="0.7" stroke-linejoin="round" >%</text>
<text x="202.40" y="766.00" font-size="15.9" fill="#ccccdc" textLength="107.00" lengthAdjust="spacingAndGlyphs" text-anchor="middle" stroke="#ccccdc" stroke-width="0.7" stroke-linejoin="round" >Memory Usage</text>
<text x="548.50" y="766.00" font-size="15.9" fill="#ccccdc" textLength="109.00" lengthAdjust="spacingAndGlyphs" text-anchor="middle" stroke="#ccccdc" stroke-width="0.7" stroke-linejoin="round" >Virtual Memory</text>
<text x="957.00" y="766.00" font-size="15.9" fill="#ccccdc" textLength="122.00" lengthAdjust="spacingAndGlyphs" text-anchor="middle" stroke="#ccccdc" stroke-width="0.7" stroke-linejoin="round" >Physical Memory</text>
<rect x="396.10" y="797.80" width="165.50" height="1.00" fill="rgba(255,255,255,0.12)" />
<text x="390.00" y="802.30" font-size="13.7" fill="#ccccdc" textLength="46.00" lengthAdjust="spacingAndGlyphs" text-anchor="end" stroke="#ccccdc" stroke-width="0.25" stroke-linejoin="round" >717 MB</text>
<rect x="396.10" y="828.48" width="165.50" height="1.00" fill="rgba(255,255,255,0.12)" />
<text x="390.00" y="832.98" font-size="13.7" fill="#ccccdc" textLength="46.00" lengthAdjust="spacingAndGlyphs" text-anchor="end" stroke="#ccccdc" stroke-width="0.25" stroke-linejoin="round" >716 MB</text>
<rect x="396.10" y="859.69" width="165.50" height="1.00" fill="rgba(255,255,255,0.12)" />
<text x="390.00" y="864.19" font-size="13.7" fill="#ccccdc" textLength="46.00" lengthAdjust="spacingAndGlyphs" text-anchor="end" stroke="#ccccdc" stroke-width="0.25" stroke-linejoin="round" >715 MB</text>
<rect x="396.10" y="890.37" width="165.50" height="1.00" fill="rgba(255,255,255,0.12)" />
<text x="390.00" y="894.87" font-size="13.7" fill="#ccccdc" textLength="46.00" lengthAdjust="spacingAndGlyphs" text-anchor="end" stroke="#ccccdc" stroke-width="0.25" stroke-linejoin="round" >714 MB</text>
<rect x="396.10" y="921.59" width="165.50" height="1.00" fill="rgba(255,255,255,0.12)" />
<text x="390.00" y="926.09" font-size="13.7" fill="#ccccdc" textLength="46.00" lengthAdjust="spacingAndGlyphs" text-anchor="end" stroke="#ccccdc" stroke-width="0.25" stroke-linejoin="round" >713 MB</text>
<rect x="396.10" y="953.07" width="165.50" height="1.00" fill="rgba(255,255,255,0.12)" />
<text x="390.00" y="957.57" font-size="13.7" fill="#ccccdc" textLength="46.00" lengthAdjust="spacingAndGlyphs" text-anchor="end" stroke="#ccccdc" stroke-width="0.25" stroke-linejoin="round" >712 MB</text>
<rect x="443.80" y="798.30" width="1.00" height="155.30" fill="rgba(255,255,255,0.12)" />
<text x="444.30" y="973.90" font-size="13.7" fill="#ccccdc" textLength="32.50" lengthAdjust="spacingAndGlyphs" text-anchor="middle" stroke="#ccccdc" stroke-width="0.25" stroke-linejoin="round" >12:08</text>
<rect x="510.80" y="798.30" width="1.00" height="155.30" fill="rgba(255,255,255,0.12)" />
<text x="511.30" y="973.90" font-size="13.7" fill="#ccccdc" textLength="32.50" lengthAdjust="spacingAndGlyphs" text-anchor="middle" stroke="#ccccdc" stroke-width="0.25" stroke-linejoin="round" >12:10</text>
<polygon points="396.1,953.6 396.1,823.1 404.3,810.1 412.5,805.0 420.8,823.6 429.0,822.2 437.2,830.3 445.4,802.1 453.6,804.2 461.9,916.7 470.1,924.5 478.3,898.4 486.5,870.2 494.7,880.1 503.0,884.4 511.2,835.2 519.4,829.0 527.6,837.3 535.8,904.3 544.1,889.8 552.3,883.1 560.5,897.6 560.5,953.6" fill="#fa6400" stroke="#fa6400" stroke-width="1"/>
<rect x="587.00" y="808.00" width="16.00" height="4.40" fill="#fa6400" rx="1" />
<text x="614.00" y="814.60" font-size="13.7" fill="#ccccdc" textLength="129.50" lengthAdjust="spacingAndGlyphs" stroke="#ccccdc" stroke-width="0.25" stroke-linejoin="round" >Used Virtual Memory</text>
<rect x="835.90" y="797.56" width="175.70" height="1.00" fill="rgba(255,255,255,0.12)" />
<text x="830.00" y="802.06" font-size="13.7" fill="#ccccdc" textLength="46.00" lengthAdjust="spacingAndGlyphs" text-anchor="end" stroke="#ccccdc" stroke-width="0.25" stroke-linejoin="round" >186 MB</text>
<rect x="835.90" y="849.66" width="175.70" height="1.00" fill="rgba(255,255,255,0.12)" />
<text x="830.00" y="854.16" font-size="13.7" fill="#ccccdc" textLength="46.00" lengthAdjust="spacingAndGlyphs" text-anchor="end" stroke="#ccccdc" stroke-width="0.25" stroke-linejoin="round" >186 MB</text>
<rect x="835.90" y="901.52" width="175.70" height="1.00" fill="rgba(255,255,255,0.12)" />
<text x="830.00" y="906.02" font-size="13.7" fill="#ccccdc" textLength="46.00" lengthAdjust="spacingAndGlyphs" text-anchor="end" stroke="#ccccdc" stroke-width="0.25" stroke-linejoin="round" >185 MB</text>
<rect x="835.90" y="952.69" width="175.70" height="1.00" fill="rgba(255,255,255,0.12)" />
<text x="830.00" y="957.19" font-size="13.7" fill="#ccccdc" textLength="46.00" lengthAdjust="spacingAndGlyphs" text-anchor="end" stroke="#ccccdc" stroke-width="0.25" stroke-linejoin="round" >185 MB</text>
<rect x="887.00" y="798.10" width="1.00" height="155.10" fill="rgba(255,255,255,0.12)" />
<text x="887.50" y="973.50" font-size="13.7" fill="#ccccdc" textLength="32.50" lengthAdjust="spacingAndGlyphs" text-anchor="middle" stroke="#ccccdc" stroke-width="0.25" stroke-linejoin="round" >12:08</text>
<rect x="957.40" y="798.10" width="1.00" height="155.10" fill="rgba(255,255,255,0.12)" />
<text x="957.90" y="973.50" font-size="13.7" fill="#ccccdc" textLength="32.50" lengthAdjust="spacingAndGlyphs" text-anchor="middle" stroke="#ccccdc" stroke-width="0.25" stroke-linejoin="round" >12:10</text>
<polygon points="835.9,953.2 835.9,912.0 844.6,866.8 853.4,849.5 862.1,913.6 870.9,907.8 879.6,939.8 888.3,848.8 897.1,855.2 905.8,918.9 914.6,947.2 923.3,864.5 932.0,869.8 940.8,900.9 949.5,918.9 958.3,887.0 967.0,869.8 975.7,894.6 984.5,863.4 993.2,845.3 1002.0,861.5 1010.7,912.4 1010.7,953.2" fill="#ff7383" stroke="#ff7383" stroke-width="1"/>
<rect x="1037.00" y="808.00" width="16.00" height="4.40" fill="#ff7383" rx="1" />
<text x="1063.50" y="814.60" font-size="13.7" fill="#ccccdc" textLength="57.00" lengthAdjust="spacingAndGlyphs" stroke="#ccccdc" stroke-width="0.25" stroke-linejoin="round" >Reserved</text>
<rect x="63.00" y="0.00" width="1535.00" height="68.00" fill="#111217" />
<rect x="0.00" y="0.00" width="62.50" height="1003.00" fill="#181b1f" />
<rect x="62.00" y="0.00" width="1.00" height="1003.00" fill="#222429" />
<g fill="none" stroke="#d3d3e1" stroke-width="1.7"><rect x="83.55" y="24.45" width="5.6" height="5.6"/><rect x="83.55" y="33.75" width="5.6" height="5.6"/><rect x="92.95" y="24.45" width="5.6" height="5.6"/><rect x="92.95" y="33.75" width="5.6" height="5.6"/></g>
<text x="111.00" y="38.70" font-size="19.9" fill="#ccccdc" textLength="69.00" lengthAdjust="spacingAndGlyphs" stroke="#ccccdc" stroke-width="0.3" stroke-linejoin="round" >General</text>
<text x="190.00" y="38.70" font-size="19.9" fill="#ccccdc" textLength="6.00" lengthAdjust="spacingAndGlyphs" stroke="#ccccdc" stroke-width="0.3" stroke-linejoin="round" >/</text>
<text x="202.50" y="38.70" font-size="19.9" fill="#ccccdc" textLength="137.50" lengthAdjust="spacingAndGlyphs" stroke="#ccccdc" stroke-width="0.3" stroke-linejoin="round" >NEW SENTINEL</text>
<polygon points="358.90,25.00 361.13,29.83 366.41,30.46 362.51,34.07 363.54,39.29 358.90,36.70 354.26,39.29 355.29,34.07 351.39,30.46 356.67,29.83" fill="#ec8a1e" stroke="#ec8a1e" stroke-width="1.3" stroke-linejoin="round"/>
<g fill="none" stroke="#d5d6e3" stroke-width="1.6"><circle cx="402.6" cy="27.1" r="2.8"/><circle cx="391.9" cy="31.9" r="2.8"/><circle cx="402.6" cy="36.9" r="2.8"/><path d="M394.4 30.7 l5.7 -2.5 M394.4 33.1 l5.7 2.6"/></g>
<rect x="1034.50" y="14.50" width="46.00" height="35.00" fill="#181b1f" rx="2.5" stroke="#25272c" stroke-width="1" />
<rect x="1090.50" y="14.50" width="40.00" height="35.00" fill="#181b1f" rx="2.5" stroke="#25272c" stroke-width="1" />
<rect x="1140.50" y="14.50" width="39.00" height="35.00" fill="#181b1f" rx="2.5" stroke="#25272c" stroke-width="1" />
<rect x="1189.50" y="14.50" width="223.50" height="35.00" fill="#181b1f" rx="2.5" stroke="#25272c" stroke-width="1" />
<rect x="1373.30" y="15.00" width="1.00" height="34.00" fill="#25272c" />
<rect x="1423.50" y="14.50" width="108.00" height="35.00" fill="#181b1f" rx="2.5" stroke="#25272c" stroke-width="1" />
<rect x="1462.30" y="15.00" width="1.00" height="34.00" fill="#25272c" />
<rect x="1541.50" y="14.50" width="39.00" height="35.00" fill="#181b1f" rx="2.5" stroke="#25272c" stroke-width="1" />
<text x="1228.50" y="37.30" font-size="15.4" fill="#9d9eab" textLength="106.50" lengthAdjust="spacingAndGlyphs" stroke="#9d9eab" stroke-width="0.6" stroke-linejoin="round" >Last 5 minutes</text>
<text x="1472.50" y="37.30" font-size="15.4" fill="#9d9eab" textLength="26.00" lengthAdjust="spacingAndGlyphs" stroke="#9d9eab" stroke-width="0.6" stroke-linejoin="round" >10s</text>
<path d="M1351.2 30.5 l3.6 3.6 l3.6 -3.6" fill="none" stroke="#9d9eab" stroke-width="1.5" stroke-linecap="round" stroke-linejoin="round"/>
<path d="M1508.2 30.5 l3.6 3.6 l3.6 -3.6" fill="none" stroke="#9d9eab" stroke-width="1.5" stroke-linecap="round" stroke-linejoin="round"/>
<g fill="none" stroke="#1f9ce4" stroke-width="1.35" stroke-linecap="round"><path d="M18.3 32.5 Q30.3 17.8 42.4 32.5 Q30.3 47.2 18.3 32.5 Z" stroke-linejoin="round"/><circle cx="30.3" cy="32.5" r="4.6"/><circle cx="30.3" cy="32.5" r="1.9"/><path d="M30.3 19.4 v3.6 M30.3 42 v3.6 M21 23 l1.8 2.6 M39.6 23 l-1.8 2.6 M21 42 l1.8 -2.6 M39.6 42 l-1.8 -2.6"/></g>
<circle cx="62" cy="57.4" r="13.2" fill="#23262c"/>
<path d="M58.9 52.2 l5.6 5.3 l-5.6 5.3" fill="none" stroke="#d5d6e3" stroke-width="2" stroke-linejoin="miter"/>
<g fill="none" stroke="#9c9dab" stroke-width="2" stroke-linecap="round"><circle cx="29.4" cy="85.6" r="8.9"/><path d="M35.9 92.3 l4.9 4.7"/></g>
<linearGradient id="ab" x1="0" y1="1" x2="0" y2="0"><stop offset="0" stop-color="#f55f3e"/><stop offset="1" stop-color="#ff8833"/></linearGradient>
<rect x="8.00" y="126.90" width="5.20" height="27.20" fill="url(#ab)" rx="1.6" />
<polygon points="30.50,130.60 33.67,137.23 40.96,138.20 35.64,143.27 36.97,150.50 30.50,147.00 24.03,150.50 25.36,143.27 20.04,138.20 27.33,137.23" fill="none" stroke="#d7d8e5" stroke-width="2" stroke-linejoin="round"/>
<g fill="none" stroke="#9c9dab" stroke-width="1.9"><rect x="20" y="184.1" width="7.6" height="7.6" rx="0.6"/><rect x="20" y="197" width="7.6" height="7.6" rx="0.6"/><rect x="32.9" y="184.1" width="7.6" height="7.6" rx="0.6"/><rect x="32.9" y="197" width="7.6" height="7.6" rx="0.6"/></g>
<g fill="none" stroke="#9c9dab" stroke-width="1.9" stroke-linecap="round" stroke-linejoin="round"><circle cx="30.3" cy="248.2" r="10.3"/><path d="M34.6 243.9 l-6.2 2.4 l-2.4 6.2 l6.2 -2.4 z"/><path d="M30.3 238.5 v1.6 M30.3 256.3 v1.6 M20.6 248.2 h1.6 M38.4 248.2 h1.6" stroke-width="1.6"/></g>
<g fill="none" stroke="#9c9dab" stroke-width="1.9" stroke-linecap="round" stroke-linejoin="round"><path d="M30.4 291.4 v2.2 M24.65 305.6 V300.55 a5.95 5.95 0 0 1 11.9 0 V305.6"/><rect x="22" y="305.9" width="17" height="3" rx="1.5"/><path d="M27.6 311 a3.1 3.1 0 0 0 5.8 0"/></g>
<polygon points="28.40,802.65 28.67,800.04 32.13,800.04 32.40,802.65 34.46,803.51 36.50,801.85 38.95,804.30 37.29,806.34 38.15,808.40 40.76,808.67 40.76,812.13 38.15,812.40 37.29,814.46 38.95,816.50 36.50,818.95 34.46,817.29 32.40,818.15 32.13,820.76 28.67,820.76 28.40,818.15 26.34,817.29 24.30,818.95 21.85,816.50 23.51,814.46 22.65,812.40 20.04,812.13 20.04,808.67 22.65,808.40 23.51,806.34 21.85,804.30 24.30,801.85 26.34,803.51" fill="none" stroke="#9c9dab" stroke-width="1.9" stroke-linejoin="round"/>
<circle cx="30.4" cy="810.4" r="3.4" fill="none" stroke="#9c9dab" stroke-width="1.9"/>
<path d="M30.4 853.6 c-2.6 1.7 -5.5 2.4 -8.4 2.5 v6.9 c0 5.4 3.5 9.3 8.4 11.6 c4.9 -2.3 8.4 -6.2 8.4 -11.6 v-6.9 c-2.9 -0.1 -5.8 -0.8 -8.4 -2.5 z" fill="none" stroke="#9c9dab" stroke-width="1.9" stroke-linejoin="round"/>
<clipPath id="av"><circle cx="30.5" cy="918.4" r="13.5"/></clipPath>
<g clip-path="url(#av)"><rect x="16" y="904" width="30" height="30" fill="#4e7a0e"/>
<rect x="19.89" y="907.89" width="3.05" height="3.05" fill="#ff8e82"/>
<rect x="25.19" y="907.89" width="3.05" height="3.05" fill="#ff8e82"/>
<rect x="33.15" y="907.89" width="3.05" height="3.05" fill="#ff8e82"/>
<rect x="38.45" y="907.89" width="3.05" height="3.05" fill="#ff8e82"/>
<rect x="25.19" y="910.54" width="3.05" height="3.05" fill="#ff8e82"/>
<rect x="27.85" y="910.54" width="3.05" height="3.05" fill="#ff8e82"/>
<rect x="30.50" y="910.54" width="3.05" height="3.05" fill="#ff8e82"/>
<rect x="33.15" y="910.54" width="3.05" height="3.05" fill="#ff8e82"/>
<rect x="25.19" y="913.19" width="3.05" height="3.05" fill="#ff8e82"/>
<rect x="33.15" y="913.19" width="3.05" height="3.05" fill="#ff8e82"/>
<rect x="25.19" y="915.85" width="3.05" height="3.05" fill="#ff8e82"/>
<rect x="33.15" y="915.85" width="3.05" height="3.05" fill="#ff8e82"/>
<rect x="19.89" y="918.50" width="3.05" height="3.05" fill="#ff8e82"/>
<rect x="22.54" y="918.50" width="3.05" height="3.05" fill="#ff8e82"/>
<rect x="35.80" y="918.50" width="3.05" height="3.05" fill="#ff8e82"/>
<rect x="38.45" y="918.50" width="3.05" height="3.05" fill="#ff8e82"/>
<rect x="19.89" y="921.15" width="3.05" height="3.05" fill="#ff8e82"/>
<rect x="22.54" y="921.15" width="3.05" height="3.05" fill="#ff8e82"/>
<rect x="27.85" y="921.15" width="3.05" height="3.05" fill="#ff8e82"/>
<rect x="30.50" y="921.15" width="3.05" height="3.05" fill="#ff8e82"/>
<rect x="35.80" y="921.15" width="3.05" height="3.05" fill="#ff8e82"/>
<rect x="38.45" y="921.15" width="3.05" height="3.05" fill="#ff8e82"/>
<rect x="19.89" y="923.80" width="3.05" height="3.05" fill="#ff8e82"/>
<rect x="22.54" y="923.80" width="3.05" height="3.05" fill="#ff8e82"/>
<rect x="25.19" y="923.80" width="3.05" height="3.05" fill="#ff8e82"/>
<rect x="33.15" y="923.80" width="3.05" height="3.05" fill="#ff8e82"/>
<rect x="35.80" y="923.80" width="3.05" height="3.05" fill="#ff8e82"/>
<rect x="38.45" y="923.80" width="3.05" height="3.05" fill="#ff8e82"/>
<rect x="22.54" y="926.45" width="3.05" height="3.05" fill="#ff8e82"/>
<rect x="27.85" y="926.45" width="3.05" height="3.05" fill="#ff8e82"/>
<rect x="30.50" y="926.45" width="3.05" height="3.05" fill="#ff8e82"/>
<rect x="35.80" y="926.45" width="3.05" height="3.05" fill="#ff8e82"/>
</g>
<circle cx="30.4" cy="972.2" r="10.3" fill="none" stroke="#9c9dab" stroke-width="1.9"/>
<text x="30.40" y="977.60" font-size="15" fill="#9c9dab" textLength="8.50" lengthAdjust="spacingAndGlyphs" text-anchor="middle" font-weight="700" >?</text>
<rect x="1044.00" y="30.00" width="3.50" height="9.80" fill="#a9aab9" />
<rect x="1049.40" y="27.50" width="3.50" height="12.30" fill="#a9aab9" />
<rect x="1054.40" y="32.50" width="3.20" height="7.30" fill="#a9aab9" />
<rect x="1059.00" y="25.30" width="3.80" height="14.50" fill="#a9aab9" />
<linearGradient id="pl" x1="0" y1="0" x2="0" y2="1"><stop offset="0" stop-color="#ffb423"/><stop offset="1" stop-color="#f58b1f"/></linearGradient>
<rect x="1060.20" y="30.60" width="3.00" height="4.60" fill="#181b1f" />
<path d="M1064.5 27.9 h3.1 v3.35 h3.35 v3.1 h-3.35 v3.35 h-3.1 v-3.35 h-3.35 v-3.1 h3.35 z" fill="url(#pl)"/>
<g fill="none" stroke="#a4a5b4" stroke-width="1.5" stroke-linejoin="round"><path d="M1104.6 25.6 h7.6 l4.6 4.6 v7.2 a1.3 1.3 0 0 1 -1.3 1.3 h-10.9 a1.3 1.3 0 0 1 -1.3 -1.3 v-10.5 a1.3 1.3 0 0 1 1.3 -1.3 z"/><path d="M1106.4 25.8 v4.3 h5.6 v-4.3 M1106.4 38.5 v-4.6 h7.4 v4.6"/></g>
<polygon points="1158.47,26.48 1158.66,24.60 1161.14,24.60 1161.33,26.48 1162.79,27.09 1164.26,25.89 1166.01,27.64 1164.81,29.11 1165.42,30.57 1167.30,30.76 1167.30,33.24 1165.42,33.43 1164.81,34.89 1166.01,36.36 1164.26,38.11 1162.79,36.91 1161.33,37.52 1161.14,39.40 1158.66,39.40 1158.47,37.52 1157.01,36.91 1155.54,38.11 1153.79,36.36 1154.99,34.89 1154.38,33.43 1152.50,33.24 1152.50,30.76 1154.38,30.57 1154.99,29.11 1153.79,27.64 1155.54,25.89 1157.01,27.09" fill="none" stroke="#a4a5b4" stroke-width="1.5" stroke-linejoin="round"/>
<circle cx="1159.9" cy="32" r="2.4" fill="none" stroke="#a4a5b4" stroke-width="1.5"/>
<g fill="none" stroke="#a4a5b4" stroke-width="1.5" stroke-linecap="round" stroke-linejoin="round"><circle cx="1209" cy="32" r="7.3"/><path d="M1209 28.2 v4.2 h-3.2"/></g>
<g fill="none" stroke="#a4a5b4" stroke-width="1.5" stroke-linecap="round"><circle cx="1392" cy="30.9" r="6.3"/><path d="M1388.8 30.9 h6.4 M1396.7 35.6 l4.7 4.2"/></g>
<g fill="none" stroke="#a4a5b4" stroke-width="1.5" stroke-linecap="round" stroke-linejoin="round"><path d="M1436.56 29.26 A7 7 0 0 1 1449.99 31.63 M1449.44 34.74 A7 7 0 0 1 1436.01 32.37"/><path d="M1436 24.7 v4.4 h4.4 M1450 39.3 v-4.4 h-4.4"/></g>
<g fill="none" stroke="#a4a5b4" stroke-width="1.5" stroke-linejoin="round" stroke-linecap="round"><rect x="1553.6" y="25" width="14.8" height="10.9" rx="1.2"/><path d="M1553.6 33.2 h14.8 M1558.6 36 l-0.8 2.9 h6.4 l-0.8 -2.9 M1556.6 39 h8.8"/></g>
</svg>
</body></html>
